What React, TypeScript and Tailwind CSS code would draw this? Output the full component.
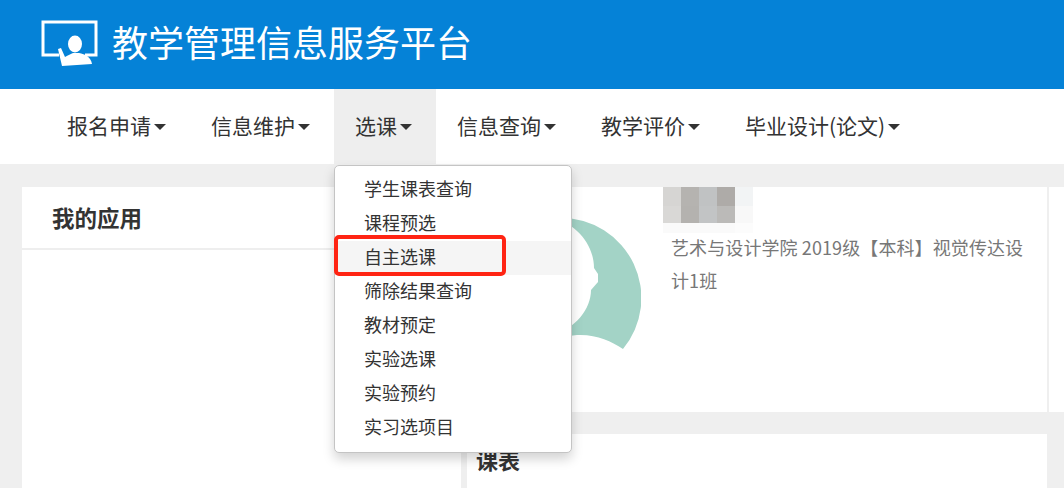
import React from "react";

const FONT = "font-['Microsoft_YaHei','Noto_Sans_CJK_SC','Noto_Sans',sans-serif]";

const navItems = ["报名申请", "信息维护", "选课", "信息查询", "教学评价", "毕业设计(论文)"];
const menuItems = ["学生课表查询", "课程预选", "自主选课", "筛除结果查询", "教材预定", "实验选课", "实验预约", "实习选项目"];
const mosaic = [
  "bg-[#d6d5d3]", "bg-[#b5b3b0]", "bg-[#c0c2c3]", "bg-[#aeaba8]", "bg-[#f2f4f5]",
  "bg-[#d9d8d6]", "bg-[#b4b2af]", "bg-[#c2c4c5]", "bg-[#bbbab8]", "bg-[#f8f8f8]",
  "bg-[#fafafa]", "bg-[#fafafa]", "bg-[#fafafa]", "bg-[#fafafa]", "bg-[#fcfcfc]",
];

function Logo() {
  return (
    <svg width="58" height="46" viewBox="0 0 58 46" className="shrink-0">
      <path d="M18 35H2V2h53v33H44" fill="none" stroke="#fff" strokeWidth="3" />
      <ellipse cx="34" cy="24" rx="7" ry="8.5" fill="#fff" />
      <path d="M17 29l3-1 4 9c3-2 6-3 8-4h6c6 1 12 4 13 11l-30 2z" fill="#fff" />
    </svg>
  );
}

function Avatar() {
  return (
    <svg width="160" height="140" viewBox="0 0 160 140" className="shrink-0">
      <path
        d="M80 0a80 80 0 0 1 62 131c-12-8-27-15-46-14l-16 2V0z"
        fill="#a3d3c6"
      />
      <path
        d="M70 0c24 4 43 26 43 50l4 6v8l-7 8c0 18-15 40-40 44z"
        fill="#fff"
      />
    </svg>
  );
}

export default function App() {
  return (
    <div className={`${FONT} relative w-[1064px] h-[488px] overflow-hidden bg-[#efefef]`}>
      <header className="h-[89px] bg-[#0582d7] flex items-start pl-[41px] pt-[20px] gap-[13px]">
        <Logo />
        <h1 className="mt-[-2px] text-[36px] leading-[46px] text-white">教学管理信息服务平台</h1>
      </header>

      <nav className="h-[75px] bg-white flex pl-[46px]">
        {navItems.map((item) => (
          <div
            key={item}
            className={`flex items-center pl-[21px] pr-[24px] pb-[2px] text-[21px] text-[#333] ${item === "选课" ? "bg-[#eeeeee]" : ""}`}
          >
            {item}
            <span className="ml-[3px] mt-[2px] border-x-[6px] border-x-transparent border-t-[6px] border-t-[#333]" />
          </div>
        ))}
      </nav>

      <main className="flex pt-[23px] pl-[22px] gap-[6px]">
        <section className="w-[439px] h-[301px] bg-white">
          <h2 className="h-[63px] border-b-2 border-[#eeeeee] pl-[30px] pt-[12px] text-[22.5px] leading-[36px] font-bold text-[#333]">
            我的应用
          </h2>
        </section>

        <div className="flex gap-[2px]">
          <div className="flex flex-col gap-[22px]">
            <section className="w-[580px] h-[225px] bg-white flex">
              <div className="w-[174px] pt-[31px] pl-[14px]">
                <Avatar />
              </div>
              <div className="w-[390px] pl-[30px] pr-[4px]">
                <div className="grid grid-cols-[repeat(5,18px)] grid-rows-[19px_17px_10px] ml-[-8px]">
                  {mosaic.map((color, i) => (
                    <div key={i} className={color} />
                  ))}
                </div>
                <p className="mt-[-2px] text-[18px] leading-[33px] tracking-[0.1px] text-[#777]">
                  艺术与设计学院 2019级【本科】视觉传达设计1班
                </p>
              </div>
            </section>
            <section className="w-[580px] h-[54px] bg-white pl-[9px] pt-[9px]">
              <h2 className="text-[22px] leading-[32px] font-bold text-[#333]">课表</h2>
            </section>
          </div>
          <div className="w-[15px] h-[225px] bg-white" />
        </div>
      </main>

      <div className="absolute left-[334px] top-[165px] w-[238px] h-[288px] pt-[7px] bg-white border border-[#c4c4c4] rounded-[5px] shadow-[0_6px_12px_rgba(0,0,0,0.175)]">
        {menuItems.map((item) => (
          <div
            key={item}
            className={`h-[34px] pl-[29px] text-[18px] leading-[30px] text-[#333] ${item === "自主选课" ? "bg-[#f5f5f5]" : ""}`}
          >
            {item}
          </div>
        ))}
      </div>
      <div className="absolute left-[334px] top-[235px] w-[172px] h-[41px] border-[4px] border-[#ff2413] rounded-[5px]" />
    </div>
  );
}
